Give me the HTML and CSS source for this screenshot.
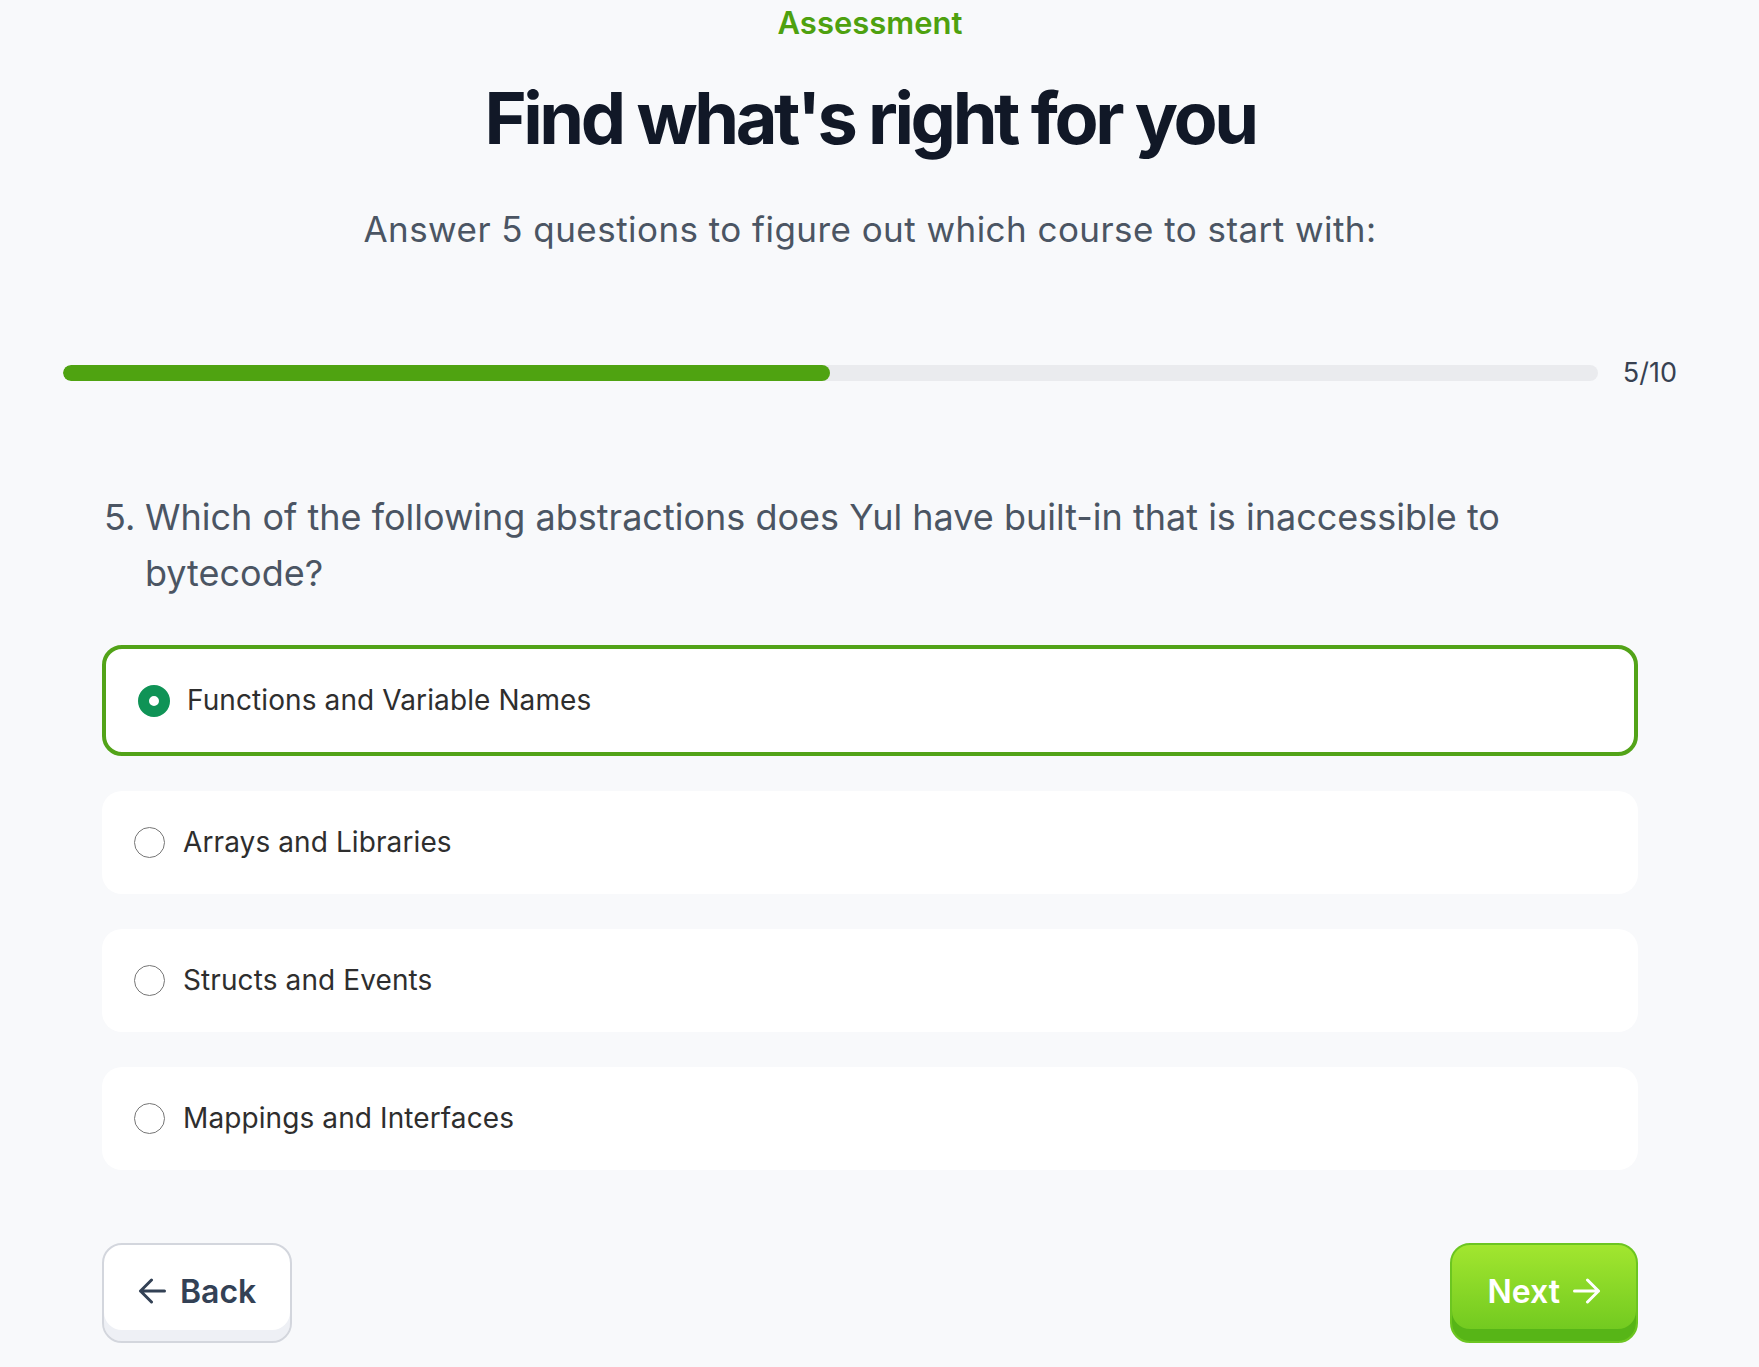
FILE: index.html
```html
<!DOCTYPE html>
<html lang="en">
<head>
  <meta charset="UTF-8">
  <meta name="viewport" content="width=device-width, initial-scale=1.0">
  <title>Assessment</title>
  <link rel="stylesheet" href="styles.css">
</head>
<body>
  <div class="page">
    <header class="intro">
      <p class="eyebrow">Assessment</p>
      <h1>Find what's right for you</h1>
      <p class="lead">Answer 5 questions to figure out which course to start with:</p>
    </header>

    <div class="progress">
      <div class="track"><div class="fill" style="width:50%"></div></div>
      <span class="count">5/10</span>
    </div>

    <section class="quiz">
      <h2 class="question">
        <span class="num">5.</span>
        <span>Which of the following abstractions does Yul have built-in that is inaccessible to bytecode?</span>
      </h2>

      <ul class="options">
        <li class="option on"><span class="radio"></span>Functions and Variable Names</li>
        <li class="option"><span class="radio"></span>Arrays and Libraries</li>
        <li class="option"><span class="radio"></span>Structs and Events</li>
        <li class="option"><span class="radio"></span>Mappings and Interfaces</li>
      </ul>

      <div class="nav">
        <button class="btn back">
          <svg class="arr" viewBox="0 0 28 26"><path d="M26.5 13H2.5M13.5 2 2.5 13l11 11"/></svg>
          Back
        </button>
        <button class="btn next">
          Next
          <svg class="arr" viewBox="0 0 28 26"><path d="M1.5 13h24M14.5 2l11 11-11 11"/></svg>
        </button>
      </div>
    </section>
  </div>
</body>
</html>
```

FILE: styles.css
```css
*{margin:0;padding:0;box-sizing:border-box;}
li{list-style:none;}
html, body{background:#f8f9fb;font-family:Inter,"Noto Sans",sans-serif;}
.page{margin-right:19px;padding-top:5px;}

.intro{text-align:center;}
.eyebrow{font-size:31px;line-height:36px;font-weight:600;color:#4ea10f;}
.intro h1{margin-top:37px;font-size:72px;line-height:80px;font-weight:700;letter-spacing:-3.4px;color:#111827;}
.lead{margin-top:51px;font-size:35px;line-height:40px;letter-spacing:0.45px;color:#4b5563;}

.progress{display:flex;align-items:center;gap:25px;width:1614px;margin:108px auto 0;}
.track{flex:1;height:16px;border-radius:8px;background:#eaebee;overflow:hidden;}
.fill{height:100%;border-radius:8px;background:#4fa311;}
.count{font-size:27px;line-height:32px;color:#374151;}

.quiz{width:1536px;margin:0 auto;}
.question{display:flex;margin-top:100px;padding-left:2px;font-size:36px;line-height:56px;font-weight:400;color:#4b5563;}
.question .num{flex:none;width:41px;}

.options{display:flex;flex-direction:column;gap:35px;margin-top:44px;}
.option{display:flex;align-items:center;gap:18px;padding:34px 32px;border-radius:20px;background:#fff;font-size:28px;line-height:35px;letter-spacing:0.1px;color:#2e2e2e;}
.option.on{border:4px solid #52a318;gap:17px;}
.radio{flex:none;width:31px;height:31px;border-radius:50%;border:1.5px solid #767676;background:#fff;}
.option.on .radio{width:32px;height:32px;border:11px solid #0f9356;}

.nav{display:flex;justify-content:space-between;margin-top:73px;}
.btn{display:flex;align-items:center;gap:14px;height:100px;border-radius:20px;font-family:inherit;font-size:32px;font-weight:600;cursor:pointer;}
.btn .arr{width:28px;height:26px;fill:none;stroke:currentColor;stroke-width:3;stroke-linecap:round;stroke-linejoin:round;}
.btn.back{padding:0 34px 4px;border:2px solid #d3d6dd;background:#fff;color:#334155;box-shadow:inset 0 -11px 0 #eef0f5;}
.btn.next{padding:0 35px 4px;gap:13px;border:2px solid #6cc521;background:linear-gradient(#a2e62f,#6cc61e);color:#fff;box-shadow:inset 0 -12px 0 #57b517;}
```
